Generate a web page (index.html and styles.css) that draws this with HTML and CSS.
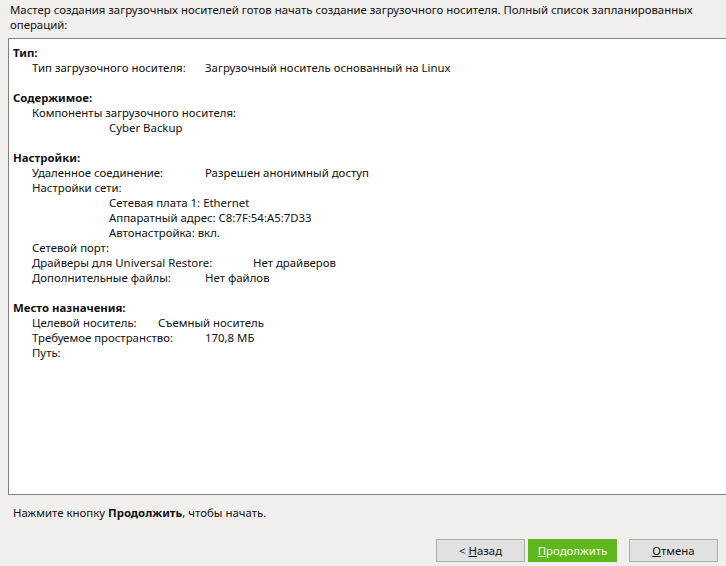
FILE: index.html
```html
<!DOCTYPE html>
<html lang="ru">
<head>
<meta charset="utf-8">
<link rel="stylesheet" href="styles.css">
</head>
<body>
<div class="page">
  <p class="intro">Мастер создания загрузочных носителей готов начать создание загрузочного носителя. Полный список запланированных операций:</p>
  <div class="summary">
    <div class="h">Тип:</div>
    <div class="l1"><span class="lab w173">Тип загрузочного носителя:</span>Загрузочный носитель основанный на Linux</div>
    <div class="gap"></div>
    <div class="h">Содержимое:</div>
    <div class="l1">Компоненты загрузочного носителя:</div>
    <div class="l2">Cyber Backup</div>
    <div class="gap"></div>
    <div class="h">Настройки:</div>
    <div class="l1"><span class="lab w173">Удаленное соединение:</span>Разрешен анонимный доступ</div>
    <div class="l1">Настройки сети:</div>
    <div class="l2">Сетевая плата 1: Ethernet</div>
    <div class="l2">Аппаратный адрес: C8:7F:54:A5:7D33</div>
    <div class="l2">Автонастройка: вкл.</div>
    <div class="l1">Сетевой порт:</div>
    <div class="l1"><span class="lab w221">Драйверы для Universal Restore:</span>Нет драйверов</div>
    <div class="l1"><span class="lab w173">Дополнительные файлы:</span>Нет файлов</div>
    <div class="gap"></div>
    <div class="h">Место назначения:</div>
    <div class="l1"><span class="lab w126">Целевой носитель:</span>Съемный носитель</div>
    <div class="l1"><span class="lab w173">Требуемое пространство:</span>170,8 МБ</div>
    <div class="l1">Путь:</div>
  </div>
  <p class="hint">Нажмите кнопку <b>Продолжить</b>, чтобы начать.</p>
  <div class="buttons">
    <button class="btn">&lt; <u>Н</u>азад</button>
    <button class="btn primary"><u>П</u>родолжить</button>
    <button class="btn cancel"><u>О</u>тмена</button>
  </div>
</div>
</body>
</html>
```
FILE: styles.css
```css
html, body {
  margin: 0;
  padding: 0;
  background: #f0efee;
  overflow: hidden;
}
.page {
  width: 726px;
  height: 566px;
  font-family: "Noto Sans", "Open Sans", sans-serif;
  font-size: 11.4px;
  line-height: 15px;
  color: #111;
}
.intro {
  margin: 0;
  padding: 2px 10px 0 10px;
  height: 38px;
  box-sizing: border-box;
}
.summary {
  margin-left: 8px;
  border: 1px solid #828282;
  border-right: none;
  background: #fff;
  padding: 6px 0 0 4px;
  box-sizing: border-box;
  height: 457px;
}
.h {
  font-weight: bold;
  height: 15px;
}
.l1 {
  padding-left: 19px;
  height: 15px;
  white-space: nowrap;
}
.l2 {
  padding-left: 96px;
  height: 15px;
  white-space: nowrap;
}
.gap {
  height: 15px;
}
.lab {
  display: inline-block;
}
.w173 { width: 173px; }
.w221 { width: 221px; }
.w126 { width: 126px; }
.hint {
  margin: 0;
  padding: 10px 0 0 13px;
  height: 44px;
  box-sizing: border-box;
}
.buttons {
  display: flex;
  padding-left: 436px;
  gap: 3px;
}
.btn {
  height: 23px;
  width: 89px;
  box-sizing: border-box;
  border: 1px solid #adadad;
  background: #e1e1e1;
  font-family: "Noto Sans", "Open Sans", sans-serif;
  font-size: 11.4px;
  color: #111;
  padding: 0;
  margin: 0;
}
.btn.primary {
  background: #5db91b;
  border-color: #5db91b;
  color: #fff;
}
.btn.cancel {
  margin-left: 9px;
}
u {
  text-decoration: underline;
  text-underline-offset: 1px;
}
```
